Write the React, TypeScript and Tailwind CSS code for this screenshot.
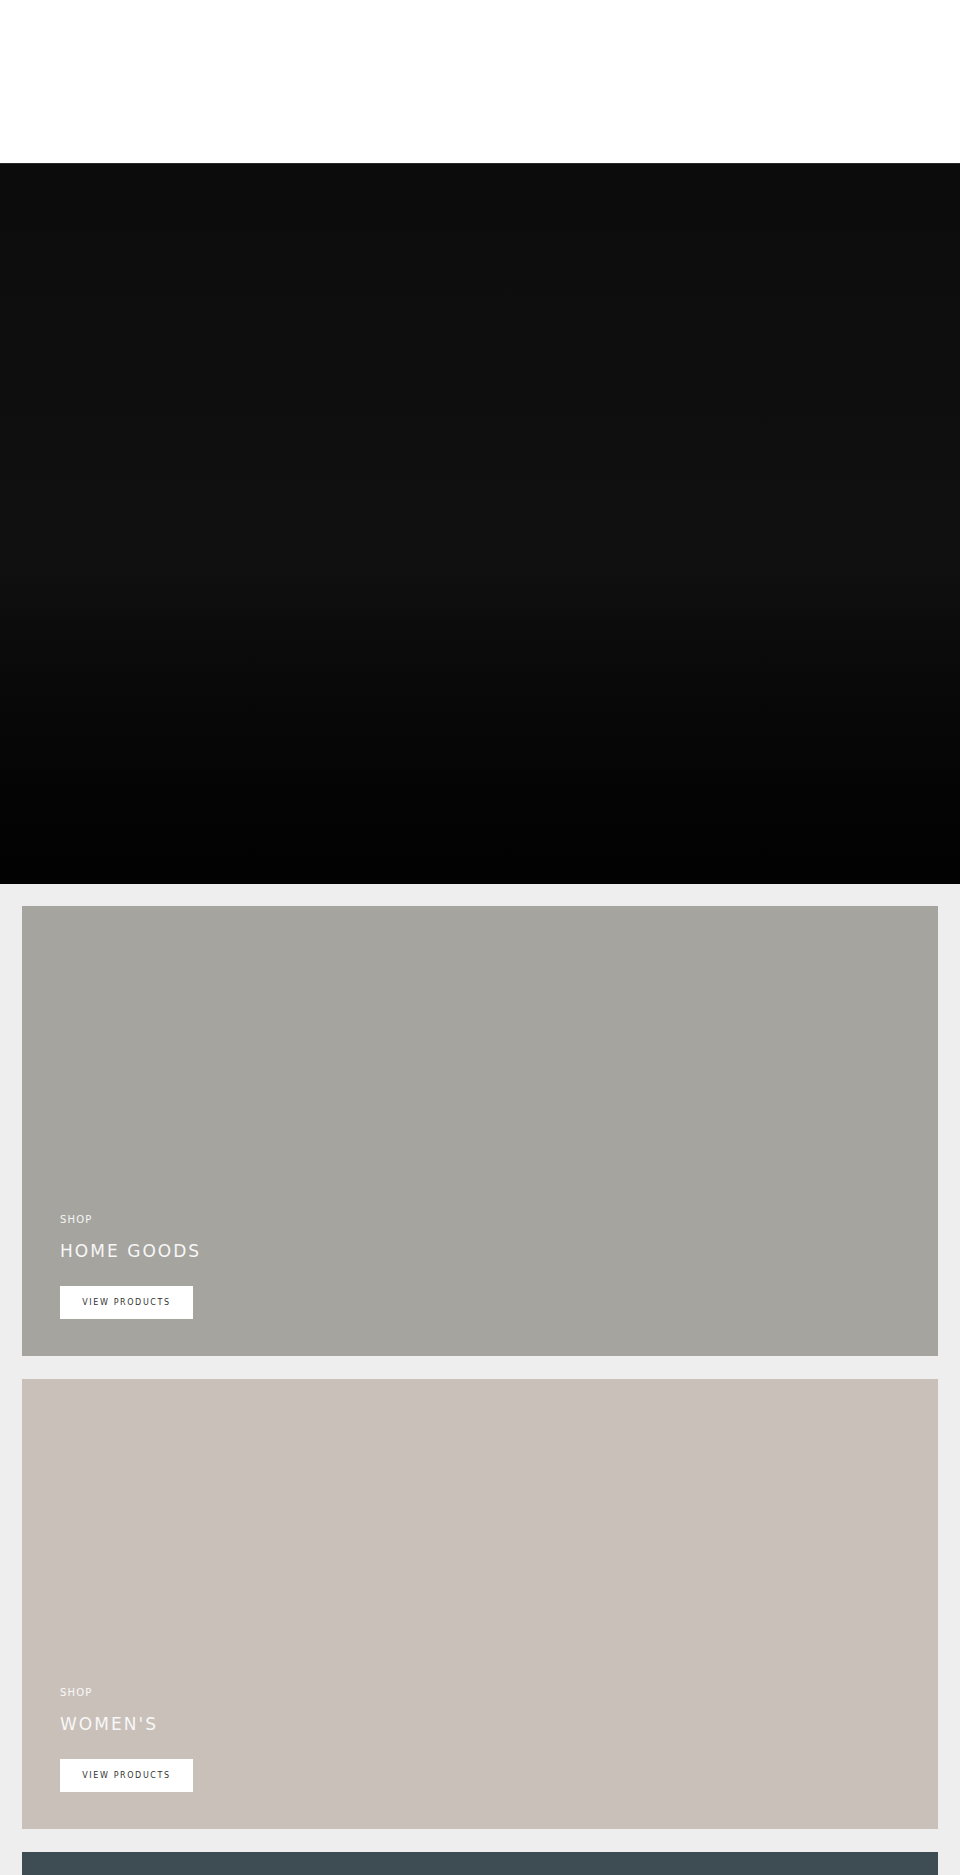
const categories = [
  { title: "HOME GOODS", bg: "bg-[#a5a49f]" },
  { title: "WOMEN'S", bg: "bg-[#c9c0ba]" },
  { title: "MEN'S", bg: "bg-[#3e4d53]" },
];

function CategoryCard({ title, bg }: { title: string; bg: string }) {
  return (
    <div className={`${bg} h-[450px] flex flex-col justify-end px-[38px] pb-[37px]`}>
      <span className="text-[10px] leading-[12px] tracking-[0.12em] text-white/90">SHOP</span>
      <h2 className="mt-[14px] text-[17px] leading-[22px] tracking-[0.12em] text-[#f7f7f7] font-normal">
        {title}
      </h2>
      <a
        href="#"
        className="mt-[24px] w-[133px] h-[33px] bg-white flex items-center justify-center text-[8px] tracking-[0.2em] text-[#333]"
      >
        VIEW PRODUCTS
      </a>
    </div>
  );
}

export default function App() {
  return (
    <div className="min-h-screen bg-[#eeeeee] font-['DejaVu_Sans',sans-serif]">
      {/* Header */}
      <header className="h-[163px] bg-white" />

      {/* Hero */}
      <section className="h-[721px] border-t border-[#2a2a2a] bg-linear-to-b from-[#0c0c0c] via-[#101010] via-55% to-[#020202]" />

      {/* Categories */}
      <div className="px-[22px] pt-[22px] pb-[22px] flex flex-col gap-[23px]">
        {categories.map((c) => (
          <CategoryCard key={c.title} title={c.title} bg={c.bg} />
        ))}
      </div>
    </div>
  );
}
